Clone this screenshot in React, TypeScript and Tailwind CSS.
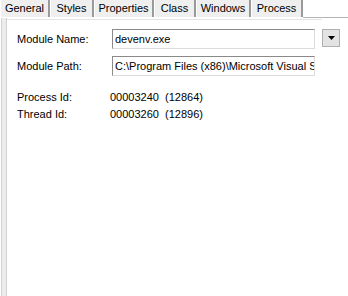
const tabs = [
  { label: 'General', w: 'w-[50px]' },
  { label: 'Styles', w: 'w-[44px]' },
  { label: 'Properties', w: 'w-[60px]' },
  { label: 'Class', w: 'w-[42px]' },
  { label: 'Windows', w: 'w-[55px]' },
  { label: 'Process', w: 'w-[52px]' },
];

function TextField({ value }: { value: string }) {
  return (
    <div className="w-[203px] h-[20px] border border-[#8a8a8a] border-r-[#dcdcdc] border-b-[#dcdcdc] bg-white flex items-center overflow-hidden whitespace-nowrap">
      <span className="pl-[2px] text-[11px] leading-none">{value}</span>
    </div>
  );
}

export default function App() {
  return (
    <div className="w-[348px] h-[296px] bg-white overflow-hidden flex flex-col text-[11px] text-black font-['Liberation_Sans',Arial,sans-serif]">
      {/* tab strip */}
      <div className="flex h-[18px] shrink-0">
        {tabs.map(t => (
          <div
            key={t.label}
            className={`${t.w} h-[17px] bg-[#efefef] border-l border-l-white border-r-2 border-r-[#9a9a9a] flex items-center justify-center leading-none`}
          >
            {t.label}
          </div>
        ))}
        <div className="flex-1 h-[18px] border-b border-[#b4b4b4]" />
      </div>

      <div className="flex flex-1">
        {/* left frame edge */}
        <div className="w-[6px] ml-px border-l border-r border-[#d2d2d2] bg-[#ececec]" />

        <div className="flex-1 flex flex-col">
          <div className="mt-[1px] h-[1px] w-[315px] bg-[#e4e4e4]" />

          <div className="pl-[10px] pt-[9px] flex flex-col">
            <div className="flex items-center h-[20px]">
              <span className="w-[95px]">Module Name:</span>
              <TextField value="devenv.exe" />
              <button className="ml-[7px] w-[18px] h-[18px] -mt-[2px] bg-[#e3e3e3] border border-[#b0b0b0] flex items-center justify-center">
                <svg width="7" height="4" viewBox="0 0 7 4">
                  <path d="M0 0h7L3.5 4z" fill="#000" />
                </svg>
              </button>
            </div>

            <div className="flex items-center h-[20px] mt-[7px]">
              <span className="w-[95px]">Module Path:</span>
              <TextField value="C:\Program Files (x86)\Microsoft Visual Studio 12.0\Common7\IDE\devenv.exe" />
            </div>

            <div className="flex items-center h-[17px] mt-[13px]">
              <span className="w-[93px]">Process Id:</span>
              <span className="whitespace-pre">00003240  (12864)</span>
            </div>
            <div className="flex items-center h-[17px]">
              <span className="w-[93px]">Thread Id:</span>
              <span className="whitespace-pre">00003260  (12896)</span>
            </div>
          </div>
        </div>
      </div>
    </div>
  );
}
